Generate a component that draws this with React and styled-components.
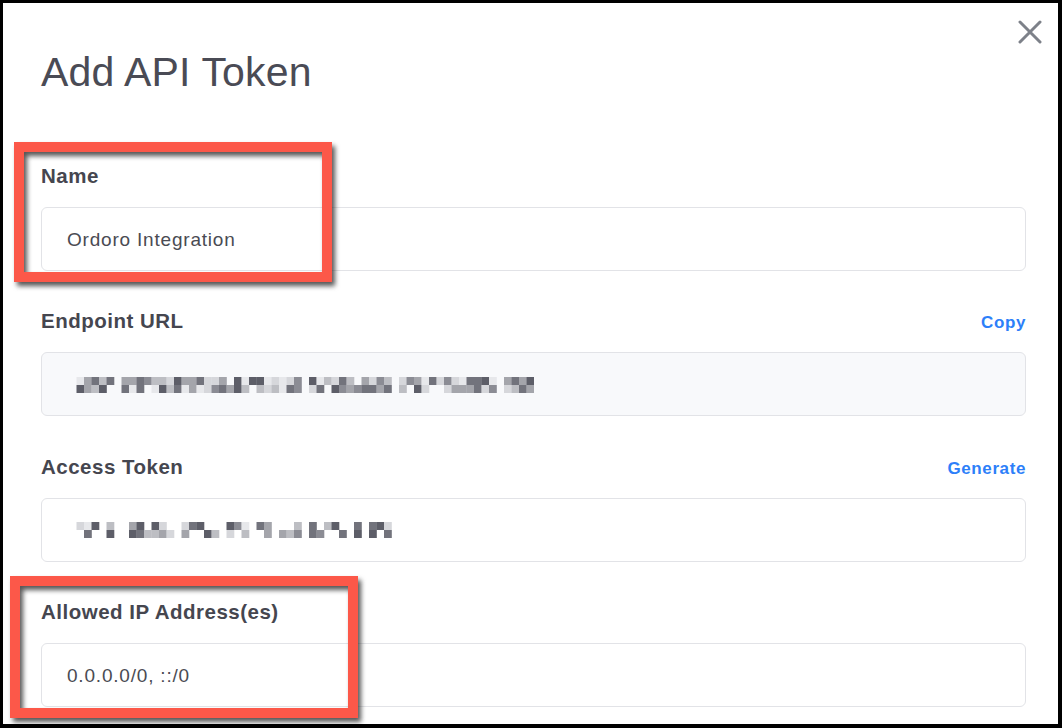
import React from "react";
import styled, { createGlobalStyle } from "styled-components";

const GlobalStyle = createGlobalStyle`
  html, body {
    margin: 0;
    padding: 0;
    background: #000;
  }
  * {
    box-sizing: border-box;
  }
`;

const Frame = styled.div`
  width: 1062px;
  height: 728px;
  background: #000;
  padding: 3px 4px 4px 3px;
  font-family: "Liberation Sans", Arial, sans-serif;
`;

const Modal = styled.div`
  position: relative;
  height: 100%;
  background: #fff;
  padding: 45px 32px 0 38px;
  overflow: hidden;
`;

const Title = styled.h1`
  margin: 0 0 68px;
  font-size: 41px;
  line-height: 48px;
  font-weight: 400;
  color: #4a4b55;
  letter-spacing: 0.2px;
`;

const Close = styled.button`
  position: absolute;
  top: 17px;
  right: 16px;
  width: 24px;
  height: 24px;
  padding: 0;
  border: none;
  background: none;
  display: flex;
`;

const Form = styled.div`
  display: flex;
  flex-direction: column;
  gap: 38.4px;
`;

const Field = styled.div`
  display: flex;
  flex-direction: column;
  gap: 19px;
`;

const FieldHead = styled.div`
  display: flex;
  justify-content: space-between;
  align-items: baseline;
  height: 24px;
`;

const Label = styled.label`
  font-size: 20.5px;
  line-height: 24px;
  font-weight: 700;
  color: #45464f;
  letter-spacing: 0.5px;
`;

const Action = styled.a`
  font-size: 17px;
  font-weight: 700;
  color: #2d7ff9;
  letter-spacing: 0.6px;
  cursor: pointer;
`;

const Input = styled.div`
  height: 64px;
  border: 1px solid #e2e3e7;
  border-radius: 6px;
  background: ${(p) => (p.$readOnly ? "#f8f9fb" : "#fff")};
  padding: 1px 25px 0;
  display: flex;
  align-items: center;
  font-size: 19px;
  color: #4a4b53;
  letter-spacing: 0.8px;
`;

const Highlight = styled.div`
  position: absolute;
  left: ${(p) => p.$x}px;
  top: ${(p) => p.$y}px;
  width: ${(p) => p.$w}px;
  height: ${(p) => p.$h}px;
  border: 10px solid #fc5849;
  filter: drop-shadow(3px 4px 2.5px rgba(30, 30, 30, 0.75));
  pointer-events: none;
`;

const BlurSvg = styled.svg`
  display: block;
  margin-left: 2px;
`;

function seeded(seed) {
  let s = seed;
  return () => {
    s = (s * 16807) % 2147483647;
    return (s - 1) / 2147483646;
  };
}

const SHADES = ["#5d5e68", "#72737c", "#8b8c94", "#a4a5ab", "#bdbec3", "#d6d7db", "#e7e8eb"];

const Pixelated = ({ cols, seed, gaps = [], sparse = 0.12 }) => {
  const rnd = seeded(seed);
  const cell = 7.5;
  const rects = [];
  for (let c = 0; c < cols; c++) {
    const isGap = gaps.includes(c);
    for (let r = 0; r < 2; r++) {
      const v = rnd();
      if (isGap && v < 0.85) continue;
      if (v < sparse) continue;
      const shade = SHADES[Math.floor(rnd() * SHADES.length)];
      rects.push(
        <rect key={`${c}-${r}`} x={c * cell} y={r * 8} width={cell + 0.3} height={8} fill={shade} />
      );
    }
  }
  return (
    <BlurSvg width={cols * cell} height={16} viewBox={`0 0 ${cols * cell} 16`}>
      {rects}
    </BlurSvg>
  );
};

export default function App() {
  return (
    <>
      <GlobalStyle />
      <Frame>
        <Modal>
          <Close aria-label="Close">
            <svg width="24" height="24" viewBox="0 0 24 24">
              <path d="M2 2 L22 22 M22 2 L2 22" stroke="#7d8189" strokeWidth="3" strokeLinecap="round" />
            </svg>
          </Close>
          <Title>Add API Token</Title>
          <Form>
            <Field>
              <FieldHead>
                <Label>Name</Label>
              </FieldHead>
              <Input>Ordoro Integration</Input>
            </Field>
            <Field>
              <FieldHead>
                <Label>Endpoint URL</Label>
                <Action>Copy</Action>
              </FieldHead>
              <Input $readOnly>
                <Pixelated cols={62} seed={4417} gaps={[6, 16, 21, 31, 43, 57]} />
              </Input>
            </Field>
            <Field>
              <FieldHead>
                <Label>Access Token</Label>
                <Action>Generate</Action>
              </FieldHead>
              <Input>
                <Pixelated cols={44} seed={913} sparse={0.3} gaps={[1, 4, 14, 20, 27, 37, 39]} />
              </Input>
            </Field>
            <Field>
              <FieldHead>
                <Label>Allowed IP Address(es)</Label>
              </FieldHead>
              <Input>0.0.0.0/0, ::/0</Input>
            </Field>
          </Form>
          <Highlight $x={11} $y={139} $w={318} $h={140} />
          <Highlight $x={7} $y={573} $w={348} $h={142} />
        </Modal>
      </Frame>
    </>
  );
}
